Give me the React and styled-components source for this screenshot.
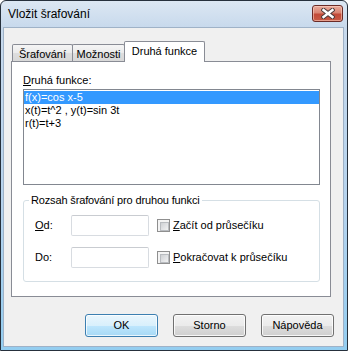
import React from "react";
import styled, { createGlobalStyle } from "styled-components";

const GlobalStyle = createGlobalStyle`
  html, body {
    margin: 0;
    padding: 0;
    overflow: hidden;
    background: #ffffff;
  }
  * {
    box-sizing: border-box;
  }
`;

const Window = styled.div`
  width: 348px;
  height: 351px;
  border: 1px solid #26303c;
  border-radius: 6px 6px 0 0;
  background: linear-gradient(to bottom, #dce7f3 0px, #c7d9ec 27px, #b5d3ee 60%, #93cdf0 100%);
  padding: 0 3px 3px 2px;
  display: flex;
  flex-direction: column;
  font-family: "Liberation Sans", Arial, sans-serif;
  font-size: 11px;
  color: #000;
`;

const TitleBar = styled.div`
  height: 26px;
  display: flex;
  align-items: flex-start;
  justify-content: space-between;
`;

const Title = styled.div`
  padding: 6px 0 0 5px;
  font-size: 12px;
  line-height: 15px;
  color: #000;
`;

const CloseButton = styled.div`
  width: 31px;
  height: 17px;
  margin: 4px 1px 0 0;
  border: 1px solid #6a2b27;
  border-radius: 3px;
  background: linear-gradient(to bottom, #e9ab9c 0%, #d98472 45%, #c24a38 55%, #c95b45 100%);
  box-shadow: inset 0 0 0 1px rgba(255, 215, 200, 0.55);
  display: flex;
  align-items: center;
  justify-content: center;
`;

const Content = styled.div`
  flex: 1;
  border: 1px solid #9fb2c7;
  background: #f0f0f0;
  padding: 13px 12px 8px 7px;
  display: flex;
  flex-direction: column;
`;

const TabRow = styled.div`
  height: 21px;
  margin-bottom: -1px;
  padding-left: 1px;
  display: flex;
  align-items: flex-end;
  position: relative;
  z-index: 2;
`;

const Tab = styled.div`
  width: ${(p) => p.$w}px;
  height: ${(p) => (p.$active ? 21 : 17)}px;
  margin-bottom: ${(p) => (p.$active ? 0 : 1)}px;
  margin-left: ${(p) => (p.$first ? 0 : -1)}px;
  border: 1px solid #898c95;
  border-bottom: none;
  border-radius: 2px 2px 0 0;
  background: ${(p) => (p.$active ? "#ffffff" : "linear-gradient(to bottom, #f5f5f5 0%, #ebebeb 50%, #dedede 51%, #d8d8d8 100%)")};
  padding-top: 3px;
  line-height: 13px;
  text-align: center;
  white-space: nowrap;
  position: relative;
  z-index: ${(p) => (p.$active ? 2 : 1)};
`;

const Panel = styled.div`
  width: 320px;
  height: 236px;
  border: 1px solid #898c95;
  background: #ffffff;
  padding: 12px 10px 0 11px;
  position: relative;
  z-index: 1;
`;

const FieldLabel = styled.div`
  line-height: 13px;
  height: 13px;
`;

const Key = styled.span`
  text-decoration: underline;
`;

const ListBox = styled.div`
  margin-top: 2px;
  height: 96px;
  border: 1px solid #828790;
  padding: 1px 0 0 0;
  background: #ffffff;
`;

const ListItem = styled.div`
  height: 13px;
  line-height: 13px;
  padding-left: 1px;
  white-space: nowrap;
  background: ${(p) => (p.$selected ? "#3399ff" : "transparent")};
  color: ${(p) => (p.$selected ? "#ffffff" : "#000000")};
`;

const GroupBox = styled.fieldset`
  margin: 9px 0 0 0;
  border: 1px solid #d5dfe5;
  border-radius: 3px;
  padding: 8px 0 13px 11px;
  min-width: 0;
`;

const GroupTitle = styled.legend`
  margin-left: -6px;
  padding: 0 2px;
  line-height: 13px;
  font-size: 11px;
  letter-spacing: -0.15px;
`;

const FormRow = styled.div`
  display: flex;
  align-items: center;
  height: 21px;
  & + & {
    margin-top: 11px;
  }
`;

const RowLabel = styled.div`
  width: 36px;
  line-height: 13px;
`;

const TextBox = styled.div`
  width: 78px;
  height: 21px;
  border: 1px solid #d8dce1;
  border-top-color: #c9ccd1;
  border-radius: 2px;
  background: #ffffff;
  margin-right: 8px;
`;

const CheckBox = styled.div`
  width: 13px;
  height: 13px;
  border: 1px solid #8f8f8f;
  background: #f4f4f4;
  padding: 2px;
  margin-right: 3px;
  &::after {
    content: "";
    display: block;
    width: 100%;
    height: 100%;
    border: 1px solid #b9bcc0;
    background: linear-gradient(to bottom right, #cfd1d4 0%, #e4e5e7 60%, #f2f2f2 100%);
  }
`;

const CheckLabel = styled.div`
  line-height: 13px;
  white-space: nowrap;
`;

const ButtonRow = styled.div`
  margin-top: 17px;
  margin-right: -3px;
  display: flex;
  justify-content: flex-end;
  gap: 15px;
`;

const Button = styled.div`
  width: 73px;
  height: 23px;
  border: 1px solid ${(p) => (p.$default ? "#3c7fb1" : "#707070")};
  border-radius: 3px;
  background: ${(p) =>
    p.$default
      ? "linear-gradient(to bottom, #eaf6fd 0%, #d9f0fc 50%, #bee6fd 51%, #a7d9f5 100%)"
      : "linear-gradient(to bottom, #f2f2f2 0%, #ebebeb 50%, #dddddd 51%, #cfcfcf 100%)"};
  box-shadow: inset 0 0 0 1px ${(p) => (p.$default ? "rgba(255,255,255,0.75)" : "rgba(255,255,255,0.8)")};
  display: flex;
  align-items: center;
  justify-content: center;
  line-height: 13px;
`;

function CloseGlyph() {
  return (
    <svg width="14" height="11" viewBox="0 0 14 11">
      <path d="M2.5 2 L11.5 9 M11.5 2 L2.5 9" stroke="#4a3a3a" strokeWidth="4.4" strokeLinecap="square" />
      <path d="M2.5 2 L11.5 9 M11.5 2 L2.5 9" stroke="#ffffff" strokeWidth="2.4" strokeLinecap="square" />
    </svg>
  );
}

const functions = ["f(x)=cos x-5", "x(t)=t^2 , y(t)=sin 3t", "r(t)=t+3"];

export default function App() {
  return (
    <>
      <GlobalStyle />
      <Window>
        <TitleBar>
          <Title>Vložit šrafování</Title>
          <CloseButton>
            <CloseGlyph />
          </CloseButton>
        </TitleBar>
        <Content>
          <TabRow>
            <Tab $w={61} $first>Šrafování</Tab>
            <Tab $w={53}>Možnosti</Tab>
            <Tab $w={81} $active>Druhá funkce</Tab>
          </TabRow>
          <Panel>
            <FieldLabel>
              <Key>D</Key>ruhá funkce:
            </FieldLabel>
            <ListBox>
              {functions.map((f, i) => (
                <ListItem key={f} $selected={i === 0}>
                  {f}
                </ListItem>
              ))}
            </ListBox>
            <GroupBox>
              <GroupTitle>Rozsah šrafování pro druhou funkci</GroupTitle>
              <FormRow>
                <RowLabel>
                  <Key>O</Key>d:
                </RowLabel>
                <TextBox />
                <CheckBox />
                <CheckLabel>
                  <Key>Z</Key>ačít od průsečíku
                </CheckLabel>
              </FormRow>
              <FormRow>
                <RowLabel>Do:</RowLabel>
                <TextBox />
                <CheckBox />
                <CheckLabel>
                  <Key>P</Key>okračovat k průsečíku
                </CheckLabel>
              </FormRow>
            </GroupBox>
          </Panel>
          <ButtonRow>
            <Button $default>OK</Button>
            <Button>Storno</Button>
            <Button>Nápověda</Button>
          </ButtonRow>
        </Content>
      </Window>
    </>
  );
}
